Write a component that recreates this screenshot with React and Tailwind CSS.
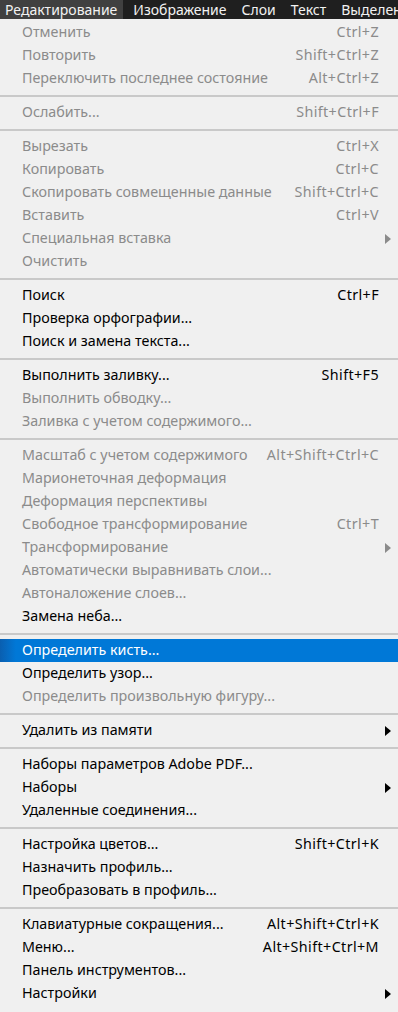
const menus = ["Редактирование", "Изображение", "Слои", "Текст", "Выделение"];

// d = disabled, s = shortcut, sub = has submenu, hl = highlighted
const groups = [
  [
    { t: "Отменить", s: "Ctrl+Z", d: true },
    { t: "Повторить", s: "Shift+Ctrl+Z", d: true },
    { t: "Переключить последнее состояние", s: "Alt+Ctrl+Z", d: true },
  ],
  [{ t: "Ослабить...", s: "Shift+Ctrl+F", d: true }],
  [
    { t: "Вырезать", s: "Ctrl+X", d: true },
    { t: "Копировать", s: "Ctrl+C", d: true },
    { t: "Скопировать совмещенные данные", s: "Shift+Ctrl+C", d: true },
    { t: "Вставить", s: "Ctrl+V", d: true },
    { t: "Специальная вставка", d: true, sub: true },
    { t: "Очистить", d: true },
  ],
  [
    { t: "Поиск", s: "Ctrl+F" },
    { t: "Проверка орфографии..." },
    { t: "Поиск и замена текста..." },
  ],
  [
    { t: "Выполнить заливку...", s: "Shift+F5" },
    { t: "Выполнить обводку...", d: true },
    { t: "Заливка с учетом содержимого...", d: true },
  ],
  [
    { t: "Масштаб с учетом содержимого", s: "Alt+Shift+Ctrl+C", d: true },
    { t: "Марионеточная деформация", d: true },
    { t: "Деформация перспективы", d: true },
    { t: "Свободное трансформирование", s: "Ctrl+T", d: true },
    { t: "Трансформирование", d: true, sub: true },
    { t: "Автоматически выравнивать слои...", d: true },
    { t: "Автоналожение слоев...", d: true },
    { t: "Замена неба..." },
  ],
  [
    { t: "Определить кисть...", hl: true },
    { t: "Определить узор..." },
    { t: "Определить произвольную фигуру...", d: true },
  ],
  [{ t: "Удалить из памяти", sub: true }],
  [
    { t: "Наборы параметров Adobe PDF..." },
    { t: "Наборы", sub: true },
    { t: "Удаленные соединения..." },
  ],
  [
    { t: "Настройка цветов...", s: "Shift+Ctrl+K" },
    { t: "Назначить профиль..." },
    { t: "Преобразовать в профиль..." },
  ],
  [
    { t: "Клавиатурные сокращения...", s: "Alt+Shift+Ctrl+K" },
    { t: "Меню...", s: "Alt+Shift+Ctrl+M" },
    { t: "Панель инструментов..." },
    { t: "Настройки", sub: true },
  ],
];

function Arrow({ color }) {
  return (
    <svg width="6" height="10" viewBox="0 0 6 10" className="absolute right-[7px] top-1/2 -translate-y-1/2">
      <path d="M0 0 L6 5 L0 10 Z" fill={color} />
    </svg>
  );
}

function Item({ item }) {
  const color = item.hl ? "text-white" : item.d ? "text-[#8b8b8b]" : "text-black";
  const bg = item.hl ? "bg-gradient-to-r from-[#0a5fb0] via-[#0078d7] via-[4%] to-[#0078d7]" : "";
  return (
    <div className={`relative flex items-center justify-between h-[23px] pl-[22px] pr-[19px] ${color} ${bg}`}>
      <span>{item.t}</span>
      {item.s && <span className="tracking-[0.4px]">{item.s}</span>}
      {item.sub && <Arrow color={item.d ? "#8b8b8b" : "#000"} />}
    </div>
  );
}

export default function App() {
  return (
    <div className="w-[398px] h-[1012px] overflow-hidden bg-[#f0f0f0] text-[14.3px] leading-none" style={{ fontFamily: '"Noto Sans", "Open Sans", sans-serif' }}>
      <div className="flex h-[19px] bg-[#1f1f1f] text-[#f2f2f2] text-[14px] whitespace-nowrap overflow-hidden">
        {menus.map((m, i) => (
          <div key={m} className={`flex items-center shrink-0 px-[5px] ${i === 0 ? "bg-[#404040] pr-[6px]" : "ml-[5px]"}`}>
            {m}
          </div>
        ))}
      </div>
      <div className="pt-[2px]">
        {groups.map((g, gi) => (
          <div key={gi}>
            {gi > 0 && (
              <div className="h-[11px] flex flex-col justify-center">
                <div className="h-[2px] bg-[#c9c9c9]" />
              </div>
            )}
            {g.map((item) => (
              <Item key={item.t} item={item} />
            ))}
          </div>
        ))}
      </div>
    </div>
  );
}
